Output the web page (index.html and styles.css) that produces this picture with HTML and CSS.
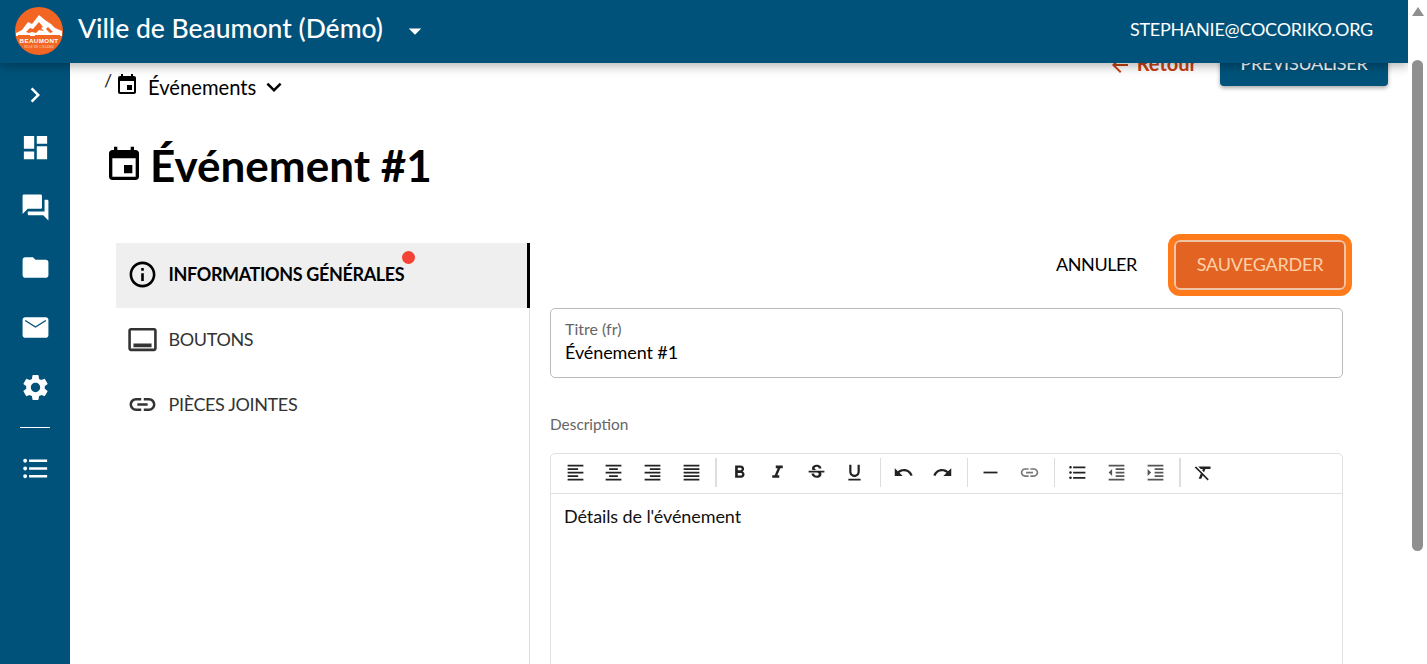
FILE: index.html
```html
<!DOCTYPE html>
<html lang="fr">
<head>
<meta charset="utf-8">
<title>Événement #1</title>
<link rel="stylesheet" href="styles.css">
</head>
<body>
<div class="window">
  <div class="app">
    <header class="topbar">
      <svg class="logo" viewBox="0 0 48 48">
        <circle cx="24" cy="24" r="24" fill="#f26522"/>
        <path fill="#fff" d="M1 26l6-3 6-8 4 2 7-9 6 5 6 4 4 4 7 3 0 5-46 0z"/>
        <path fill="#f26522" d="M11 25l4-4 3 1 6-7 4 5-2 1 3 3-5-1-3 3-4-1-3 1zM33 20l5 5-3 1-4-4zM3 28h12v1H3zM20 28h25v1H20zM7 30h34v1H7z"/>
        <text x="24" y="36" class="logo-name" text-anchor="middle">BEAUMONT</text>
        <text x="24" y="41" class="logo-sub" text-anchor="middle">VILLE DE L'ISLAND</text>
      </svg>
      <span class="org">Ville de Beaumont (Démo)</span>
      <svg class="ico ico-drop" viewBox="0 0 24 24"><path d="M7 10l5 5 5-5z"/></svg>
      <span class="user">STEPHANIE@COCORIKO.ORG</span>
    </header>

    <nav class="sidebar">
      <svg class="ico side-chevron" viewBox="0 0 24 24"><path d="M10 6L8.59 7.41 13.17 12l-4.58 4.59L10 18l6-6z"/></svg>
      <svg class="ico side-ico" viewBox="0 0 24 24"><path d="M3 13h8V3H3v10zm0 8h8v-6H3v6zm10 0h8V11h-8v10zm0-18v6h8V3h-8z"/></svg>
      <svg class="ico side-ico" viewBox="0 0 24 24"><path d="M21 6h-2v9H6v2c0 .55.45 1 1 1h11l4 4V7c0-.55-.45-1-1-1zm-4 6V3c0-.55-.45-1-1-1H3c-.55 0-1 .45-1 1v14l4-4h10c.55 0 1-.45 1-1z"/></svg>
      <svg class="ico side-ico" viewBox="0 0 24 24"><path d="M10 4H4c-1.1 0-1.99.9-1.99 2L2 18c0 1.1.9 2 2 2h16c1.1 0 2-.9 2-2V8c0-1.1-.9-2-2-2h-8l-2-2z"/></svg>
      <svg class="ico side-ico" viewBox="0 0 24 24"><path d="M20 4H4c-1.1 0-1.99.9-1.99 2L2 18c0 1.1.9 2 2 2h16c1.1 0 2-.9 2-2V6c0-1.1-.9-2-2-2zm0 3.2l-8 5-8-5V6l8 5 8-5v1.2z"/></svg>
      <svg class="ico side-ico" viewBox="0 0 24 24"><path d="M19.14 12.94c.04-.3.06-.61.06-.94 0-.32-.02-.64-.07-.94l2.03-1.58c.18-.14.23-.41.12-.61l-1.92-3.32c-.12-.22-.37-.29-.59-.22l-2.39.96c-.5-.38-1.03-.7-1.62-.94l-.36-2.54c-.04-.24-.24-.41-.48-.41h-3.84c-.24 0-.43.17-.47.41l-.36 2.54c-.59.24-1.13.57-1.62.94l-2.39-.96c-.22-.08-.47 0-.59.22L2.74 8.87c-.12.21-.08.47.12.61l2.03 1.58c-.05.3-.09.63-.09.94s.02.64.07.94l-2.03 1.58c-.18.14-.23.41-.12.61l1.92 3.32c.12.22.37.29.59.22l2.39-.96c.5.38 1.03.7 1.62.94l.36 2.54c.05.24.24.41.48.41h3.84c.24 0 .44-.17.47-.41l.36-2.54c.59-.24 1.13-.56 1.62-.94l2.39.96c.22.08.47 0 .59-.22l1.92-3.32c.12-.22.07-.47-.12-.61l-2.01-1.58zM12 15.6c-1.98 0-3.6-1.62-3.6-3.6s1.62-3.6 3.6-3.6 3.6 1.62 3.6 3.6-1.62 3.6-3.6 3.6z"/></svg>
      <div class="side-rule"></div>
      <svg class="ico side-ico" viewBox="0 0 24 24"><path d="M4 10.5c-.83 0-1.5.67-1.5 1.5s.67 1.5 1.5 1.5 1.5-.67 1.5-1.5-.67-1.5-1.5-1.5zm0-6c-.83 0-1.5.67-1.5 1.5S3.17 7.5 4 7.5 5.5 6.83 5.5 6 4.83 4.5 4 4.5zm0 12c-.83 0-1.5.68-1.5 1.5s.68 1.5 1.5 1.5 1.5-.68 1.5-1.5-.67-1.5-1.5-1.5zM7 19h14v-2H7v2zm0-6h14v-2H7v2zm0-8v2h14V5H7z"/></svg>
    </nav>

    <main class="main">
      <div class="crumb-row">
        <div class="crumbs">
          <span class="slash">/</span>
          <svg class="ico crumb-ico" viewBox="0 0 24 24"><path d="M17 12h-5v5h5v-5zM16 1v2H8V1H6v2H5c-1.11 0-1.99.9-1.99 2L3 19c0 1.1.89 2 2 2h14c1.1 0 2-.9 2-2V5c0-1.1-.9-2-2-2h-1V1h-2zm3 18H5V8h14v11z"/></svg>
          <span class="crumb-text">Événements</span>
          <svg class="ico crumb-more" viewBox="0 0 24 24"><path d="M16.59 8.59L12 13.17 7.41 8.59 6 10l6 6 6-6z"/></svg>
        </div>
        <div class="page-actions">
          <span class="back"><svg class="ico back-ico" viewBox="0 0 24 24"><path d="M20 11H7.83l5.59-5.59L12 4l-8 8 8 8 1.41-1.41L7.83 13H20v-2z"/></svg>Retour</span>
          <span class="preview">PRÉVISUALISER</span>
        </div>
      </div>

      <h1 class="title">
        <svg class="ico title-ico" viewBox="0 0 24 24"><path d="M17 12h-5v5h5v-5zM16 1v2H8V1H6v2H5c-1.11 0-1.99.9-1.99 2L3 19c0 1.1.89 2 2 2h14c1.1 0 2-.9 2-2V5c0-1.1-.9-2-2-2h-1V1h-2zm3 18H5V8h14v11z"/></svg>
        Événement #1
      </h1>

      <div class="columns">
        <div class="tabs">
          <div class="tab tab-active">
            <svg class="ico tab-ico" viewBox="0 0 24 24"><path d="M11 7h2v2h-2zm0 4h2v6h-2zm1-9C6.48 2 2 6.48 2 12s4.48 10 10 10 10-4.48 10-10S17.52 2 12 2zm0 18c-4.41 0-8-3.59-8-8s3.59-8 8-8 8 3.59 8 8-3.59 8-8 8z"/></svg>
            <span class="tab-label">INFORMATIONS GÉNÉRALES<span class="dot"></span></span>
          </div>
          <div class="tab">
            <svg class="ico tab-ico" viewBox="0 0 24 24"><path d="M21 3H3c-1.1 0-2 .9-2 2v14c0 1.1.9 2 2 2h18c1.1 0 2-.9 2-2V5c0-1.1-.9-2-2-2zm0 16H3V5h18v14zM5 15h14v3H5z"/></svg>
            <span class="tab-label">BOUTONS</span>
          </div>
          <div class="tab">
            <svg class="ico tab-ico" viewBox="0 0 24 24"><path d="M3.9 12c0-1.71 1.39-3.1 3.1-3.1h4V7H7c-2.76 0-5 2.24-5 5s2.24 5 5 5h4v-1.9H7c-1.71 0-3.1-1.39-3.1-3.1zM8 13h8v-2H8v2zm9-6h-4v1.9h4c1.71 0 3.1 1.39 3.1 3.1s-1.39 3.1-3.1 3.1h-4V17h4c2.76 0 5-2.24 5-5s-2.24-5-5-5z"/></svg>
            <span class="tab-label">PIÈCES JOINTES</span>
          </div>
        </div>

        <div class="form">
          <div class="form-actions">
            <span class="cancel">ANNULER</span>
            <span class="save">SAUVEGARDER</span>
          </div>
          <div class="field">
            <span class="field-label">Titre (fr)</span>
            <span class="field-value">Événement #1</span>
          </div>
          <div class="desc-label">Description</div>
          <div class="editor">
            <div class="toolbar">
              <span class="tb"><svg viewBox="0 0 24 24"><path d="M15 15H3v2h12v-2zm0-8H3v2h12V7zM3 13h18v-2H3v2zm0 8h18v-2H3v2zM3 3v2h18V3H3z"/></svg></span>
              <span class="tb"><svg viewBox="0 0 24 24"><path d="M7 15v2h10v-2H7zm-4 6h18v-2H3v2zm0-8h18v-2H3v2zm4-6v2h10V7H7zM3 3v2h18V3H3z"/></svg></span>
              <span class="tb"><svg viewBox="0 0 24 24"><path d="M3 21h18v-2H3v2zm6-4h12v-2H9v2zm-6-4h18v-2H3v2zm6-4h12V7H9v2zM3 3v2h18V3H3z"/></svg></span>
              <span class="tb"><svg viewBox="0 0 24 24"><path d="M3 21h18v-2H3v2zm0-4h18v-2H3v2zm0-4h18v-2H3v2zm0-4h18V7H3v2zm0-6v2h18V3H3z"/></svg></span>
              <span class="sep sep-wide"></span>
              <span class="tb"><svg viewBox="0 0 24 24"><path d="M15.6 10.79c.97-.67 1.65-1.77 1.65-2.79 0-2.26-1.75-4-4-4H7v14h7.04c2.09 0 3.71-1.7 3.71-3.79 0-1.52-.86-2.82-2.15-3.42zM10 6.5h3c.83 0 1.5.67 1.5 1.5s-.67 1.5-1.5 1.5h-3v-3zm3.5 9H10v-3h3.5c.83 0 1.5.67 1.5 1.5s-.67 1.5-1.5 1.5z"/></svg></span>
              <span class="tb"><svg viewBox="0 0 24 24"><path d="M10 4v3h2.21l-3.42 8H6v3h8v-3h-2.21l3.42-8H18V4z"/></svg></span>
              <span class="tb"><svg viewBox="0 0 24 24"><path d="M6.85 7.08C6.85 4.37 9.45 3 12.24 3c1.64 0 3 .49 3.9 1.28.77.65 1.46 1.73 1.46 3.24h-3.01c0-.31-.05-.59-.15-.85-.29-.86-1.2-1.28-2.25-1.28-1.86 0-2.34 1.02-2.34 1.7 0 .48.25.88.74 1.21.38.25.77.48 1.41.7H7.39c-.21-.34-.54-.89-.54-1.92zM21 12v-2H3v2h9.62c1.15.45 1.96.75 1.96 1.97 0 1-.81 1.67-2.28 1.67-1.54 0-2.93-.54-2.93-2.51H6.4c0 .55.08 1.13.24 1.58.81 2.29 3.29 3.3 5.67 3.3 2.27 0 5.3-.89 5.3-4.05 0-.3-.01-1.16-.48-1.94H21V12z"/></svg></span>
              <span class="tb"><svg viewBox="0 0 24 24"><path d="M12 17c3.31 0 6-2.69 6-6V3h-2.5v8c0 1.93-1.57 3.5-3.5 3.5S8.5 12.93 8.5 11V3H6v8c0 3.31 2.69 6 6 6zm-7 2v2h14v-2H5z"/></svg></span>
              <span class="sep"></span>
              <span class="tb"><svg viewBox="0 0 24 24"><path d="M12.5 8c-2.65 0-5.05.99-6.9 2.6L2 7v9h9l-3.62-3.62c1.39-1.16 3.16-1.88 5.12-1.88 3.54 0 6.55 2.31 7.6 5.5l2.37-.78C21.08 11.03 17.15 8 12.5 8z"/></svg></span>
              <span class="tb"><svg viewBox="0 0 24 24"><path d="M18.4 10.6C16.55 8.99 14.15 8 11.5 8c-4.65 0-8.58 3.03-9.96 7.22L3.9 16c1.05-3.19 4.05-5.5 7.6-5.5 1.95 0 3.73.72 5.12 1.88L13 16h9V7l-3.6 3.6z"/></svg></span>
              <span class="sep"></span>
              <span class="tb"><svg viewBox="0 0 24 24"><path d="M4 11h16v2H4z"/></svg></span>
              <span class="tb tb-muted"><svg viewBox="0 0 24 24"><path d="M3.9 12c0-1.71 1.39-3.1 3.1-3.1h4V7H7c-2.76 0-5 2.24-5 5s2.24 5 5 5h4v-1.9H7c-1.71 0-3.1-1.39-3.1-3.1zM8 13h8v-2H8v2zm9-6h-4v1.9h4c1.71 0 3.1 1.39 3.1 3.1s-1.39 3.1-3.1 3.1h-4V17h4c2.76 0 5-2.24 5-5s-2.24-5-5-5z"/></svg></span>
              <span class="sep"></span>
              <span class="tb"><svg viewBox="0 0 24 24"><path d="M4 10.5c-.83 0-1.5.67-1.5 1.5s.67 1.5 1.5 1.5 1.5-.67 1.5-1.5-.67-1.5-1.5-1.5zm0-6c-.83 0-1.5.67-1.5 1.5S3.17 7.5 4 7.5 5.5 6.83 5.5 6 4.83 4.5 4 4.5zm0 12c-.83 0-1.5.68-1.5 1.5s.68 1.5 1.5 1.5 1.5-.68 1.5-1.5-.67-1.5-1.5-1.5zM7 19h14v-2H7v2zm0-6h14v-2H7v2zm0-8v2h14V5H7z"/></svg></span>
              <span class="tb tb-soft"><svg viewBox="0 0 24 24"><path d="M11 17h10v-2H11v2zm-8-5l4 4V8l-4 4zm0 9h18v-2H3v2zM3 3v2h18V3H3zm8 6h10V7H11v2zm0 4h10v-2H11v2z"/></svg></span>
              <span class="tb tb-soft"><svg viewBox="0 0 24 24"><path d="M3 21h18v-2H3v2zM3 8v8l4-4-4-4zm8 9h10v-2H11v2zM3 3v2h18V3H3zm8 6h10V7H11v2zm0 4h10v-2H11v2z"/></svg></span>
              <span class="sep sep-wide"></span>
              <span class="tb"><svg viewBox="0 0 24 24"><path d="M3.27 5L2 6.27l6.97 6.97L6.5 19h3l1.57-3.66L16.73 21 18 19.73 3.55 5.27 3.27 5zM6 5v.18L8.82 8h2.4l-.72 1.68 2.1 2.1L14.21 8H20V5H6z"/></svg></span>
            </div>
            <div class="editor-body">Détails de l'événement</div>
          </div>
        </div>
      </div>
    </main>
  </div>

  <aside class="scrollbar">
    <span class="scroll-up"></span>
    <span class="scroll-thumb"></span>
  </aside>
</div>
</body>
</html>
```

FILE: styles.css
```css
* { box-sizing: border-box; }

html, body {
  margin: 0;
  height: 100%;
  overflow: hidden;
  background: #fff;
}

body {
  font-family: Lato, "Noto Sans", sans-serif;
  color: #000;
}

.ico { fill: currentColor; flex: none; display: block; }

.window {
  display: flex;
  height: 664px;
}

.app {
  position: relative;
  flex: 1;
  min-width: 0;
  display: flex;
  height: 664px;
  overflow: hidden;
}

.scrollbar {
  width: 19px;
  flex: none;
  position: relative;
  background: #fff;
  display: flex;
  flex-direction: column;
  align-items: center;
}

.scroll-up {
  margin-top: 7px;
  width: 0;
  height: 0;
  border-left: 6px solid transparent;
  border-right: 6px solid transparent;
  border-bottom: 9px solid #8f8f8f;
}

.scroll-thumb {
  margin-top: 44px;
  width: 11px;
  height: 491px;
  border-radius: 6px;
  background: #8f8f8f;
}

.topbar {
  position: absolute;
  top: 0;
  left: 0;
  right: 0;
  height: 63px;
  z-index: 5;
  display: flex;
  align-items: center;
  background: #00527a;
  color: #fff;
  padding: 0 35px 0 15px;
  box-shadow: 0 3px 10px rgba(0, 0, 0, 0.3);
}

.logo {
  width: 48px;
  height: 48px;
  flex: none;
  margin-bottom: 1px;
}

.logo-name {
  font-family: "Liberation Sans", sans-serif;
  font-size: 6.2px;
  font-weight: 700;
  fill: #fff;
  letter-spacing: 0.4px;
}

.logo-sub {
  font-family: Lato, sans-serif;
  font-size: 2.8px;
  fill: #fff;
  opacity: 0.75;
  letter-spacing: 0.35px;
}

.org {
  margin-left: 15px;
  font-size: 26.5px;
  font-weight: 500;
  line-height: 30px;
  margin-bottom: 7px;
}

.ico-drop {
  width: 30px;
  height: 30px;
  margin-left: 17px;
  margin-bottom: 2px;
}

.user {
  margin-left: auto;
  font-size: 18px;
  letter-spacing: -0.23px;
  margin-bottom: 5px;
}

.sidebar {
  width: 70px;
  flex: none;
  background: #00527a;
  color: #fff;
  display: flex;
  flex-direction: column;
  align-items: center;
  padding-top: 80px;
}

.side-chevron {
  width: 30px;
  height: 30px;
  margin-bottom: 22px;
}

.side-ico {
  width: 31px;
  height: 31px;
  margin-bottom: 29px;
}

.side-rule {
  width: 30px;
  height: 1px;
  background: #fff;
  margin: -5px 0 25px;
}

.main {
  flex: 1;
  min-width: 0;
  padding: 40px 20px 0 34px;
}

.crumb-row {
  display: flex;
  justify-content: space-between;
  align-items: flex-start;
  height: 46px;
}

.crumbs {
  display: flex;
  align-items: center;
  margin-top: 32px;
}

.slash {
  font-size: 18px;
  width: 10px;
  margin-top: -15px;
  margin-right: 1px;
  color: #222;
}

.crumb-ico {
  width: 24px;
  height: 24px;
  margin-bottom: 4px;
}

.crumb-text {
  font-size: 20.2px;
  margin-left: 9px;
}

.crumb-more {
  width: 30px;
  height: 30px;
  margin-left: 3px;
}

.page-actions {
  display: flex;
  align-items: center;
  gap: 23px;
}

.back {
  display: flex;
  align-items: center;
  gap: 5px;
  font-size: 20px;
  font-weight: 700;
  color: #c8400f;
}

.back-ico {
  width: 24px;
  height: 24px;
  margin-top: 4px;
}

.preview {
  width: 168px;
  height: 46px;
  border-radius: 4px;
  background: #00527a;
  color: #fff;
  font-size: 18px;
  letter-spacing: -0.25px;
  display: flex;
  align-items: center;
  justify-content: center;
  box-shadow: 0 2px 4px rgba(0, 0, 0, 0.35);
}

.title {
  margin: 36px 0 0;
  display: flex;
  align-items: center;
  height: 86px;
  font-size: 44px;
  font-weight: 700;
  gap: 6px;
}

.title-ico {
  width: 40px;
  height: 40px;
}

.columns {
  display: flex;
  margin-top: 35px;
  padding-left: 12px;
}

.tabs {
  width: 414px;
  flex: none;
  min-height: 430px;
  border-right: 1px solid #ddd;
}

.tab {
  height: 65px;
  display: flex;
  align-items: center;
  gap: 11px;
  padding-left: 10.5px;
  padding-bottom: 2px;
  font-size: 18px;
  letter-spacing: -0.36px;
  color: #333;
}

.tab-active {
  background: #efefef;
  color: #000;
  font-weight: 700;
  border-right: 3px solid #000;
  margin-right: -1px;
}

.tab-ico {
  width: 31px;
  height: 31px;
}

.tab-label {
  position: relative;
  margin-bottom: 2px;
}

.dot {
  position: absolute;
  top: -12px;
  right: -11px;
  width: 13px;
  height: 13px;
  border-radius: 50%;
  background: #f44336;
}

.form {
  flex: 1;
  min-width: 0;
  margin-left: 20px;
  margin-right: 45px;
  margin-top: -9px;
}

.form-actions {
  display: flex;
  justify-content: flex-end;
  align-items: center;
  height: 62px;
  margin-right: -9px;
  margin-bottom: 12px;
}

.cancel {
  font-size: 18px;
  letter-spacing: -0.4px;
  margin-right: 31px;
  margin-bottom: 2px;
}

.save {
  width: 184px;
  height: 62px;
  border-radius: 12px;
  border: 6px solid #ff7a1a;
  background: #e36422;
  box-shadow: inset 0 0 0 2px #f0c4a4;
  color: #ffcfa8;
  font-size: 18px;
  letter-spacing: -0.2px;
  padding-bottom: 2px;
  display: flex;
  align-items: center;
  justify-content: center;
}

.field {
  height: 70px;
  border: 1px solid #bbb;
  border-radius: 5px;
  padding: 11px 14px 0;
  display: flex;
  flex-direction: column;
}

.field-label {
  font-size: 16px;
  line-height: 18px;
  color: #666;
}

.field-value {
  font-size: 18px;
  letter-spacing: -0.1px;
  line-height: 24px;
  margin-top: 2px;
}

.desc-label {
  margin-top: 37px;
  font-size: 15.4px;
  line-height: 18px;
  color: #666;
}

.editor {
  margin-top: 20px;
  height: 260px;
  border: 1px solid #e0e0e0;
  border-radius: 5px;
}

.toolbar {
  display: flex;
  align-items: center;
  height: 40px;
  padding: 0 0 2px 5px;
  border-bottom: 1px solid #e0e0e0;
}

.tb {
  width: 38.6px;
  height: 30px;
  flex: none;
  display: flex;
  align-items: center;
  justify-content: center;
  color: #222;
  fill: currentColor;
}

.tb svg {
  width: 21px;
  height: 21px;
  display: block;
}

.tb-muted { color: #777; }
.tb-soft { color: #555; }

.sep {
  width: 1px;
  height: 29px;
  flex: none;
  background: #ddd;
  margin: 0 3.5px 0 5.5px;
}

.sep-wide {
  width: 2px;
  margin: 0 3px 0 4.5px;
}

.editor-body {
  padding: 11px 13px;
  font-size: 18px;
  letter-spacing: -0.1px;
  line-height: 22px;
  color: #111;
}
```
